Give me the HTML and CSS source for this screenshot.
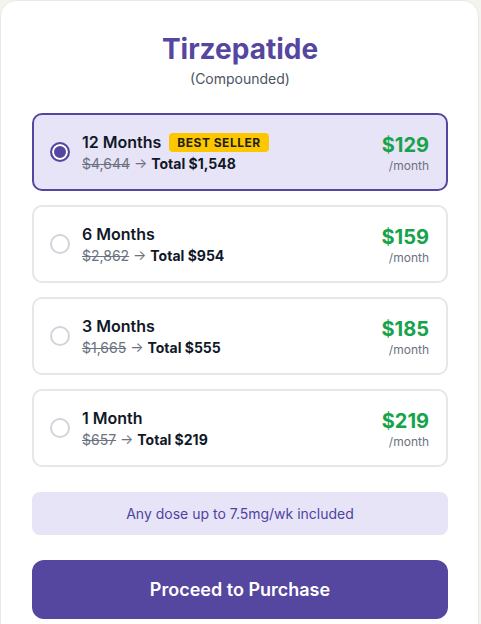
FILE: index.html
```html
<!DOCTYPE html>
<html lang="en">
  <head>
    <meta charset="UTF-8" />
    <meta name="viewport" content="width=device-width, initial-scale=1.0" />
    <title>Tirzepatide</title>
    <link rel="stylesheet" href="styles.css">
  </head>
  <body>
    <main class="card">
      <header class="head">
        <h1>Tirzepatide</h1>
        <p class="sub">(Compounded)</p>
      </header>

      <div class="plans">
        <label class="plan selected">
          <span class="radio"></span>
          <span class="info">
            <span class="name">12 Months <span class="badge">BEST SELLER</span></span>
            <span class="total"><s>$4,644</s> <span class="arrow">→</span> <b>Total $1,548</b></span>
          </span>
          <span class="price">
            <span class="amount">$129</span>
            <span class="per">/month</span>
          </span>
        </label>

        <label class="plan">
          <span class="radio"></span>
          <span class="info">
            <span class="name">6 Months</span>
            <span class="total"><s>$2,862</s> <span class="arrow">→</span> <b>Total $954</b></span>
          </span>
          <span class="price">
            <span class="amount">$159</span>
            <span class="per">/month</span>
          </span>
        </label>

        <label class="plan">
          <span class="radio"></span>
          <span class="info">
            <span class="name">3 Months</span>
            <span class="total"><s>$1,665</s> <span class="arrow">→</span> <b>Total $555</b></span>
          </span>
          <span class="price">
            <span class="amount">$185</span>
            <span class="per">/month</span>
          </span>
        </label>

        <label class="plan">
          <span class="radio"></span>
          <span class="info">
            <span class="name">1 Month</span>
            <span class="total"><s>$657</s> <span class="arrow">→</span> <b>Total $219</b></span>
          </span>
          <span class="price">
            <span class="amount">$219</span>
            <span class="per">/month</span>
          </span>
        </label>
      </div>

      <p class="note">Any dose up to 7.5mg/wk included</p>

      <button class="buy" type="button">Proceed to Purchase</button>
    </main>
  </body>
</html>
```

FILE: styles.css
```css
* {
    margin: 0;
    padding: 0;
    box-sizing: border-box;
}
body {
    font-family: Inter, "Noto Sans", sans-serif;
    background-color: #f5f3ee;
    color: #111827;
}
.card {
    width: 479px;
    min-height: 640px;
    background-color: #fff;
    border: 1px solid #ece9e3;
    border-radius: 16px;
    padding: 30px 30px 20px 31px;
}
.head {
    text-align: center;
}
.head h1 {
    font-size: 28px;
    line-height: 36px;
    font-weight: 700;
    color: #5546a0;
}
.sub {
    margin-top: 2px;
    font-size: 14px;
    line-height: 20px;
    color: #4b5563;
}
.plans {
    display: flex;
    flex-direction: column;
    gap: 14px;
    margin-top: 24px;
}
.plan {
    display: flex;
    align-items: center;
    height: 78px;
    padding: 0 17px 0 16px;
    border: 2px solid #e5e7eb;
    border-radius: 10px;
    background-color: #fff;
    cursor: pointer;
}
.plan.selected {
    border-color: #5546a0;
    background-color: #e8e4f7;
}
.radio {
    width: 20px;
    height: 20px;
    flex: none;
    border: 2px solid #d1d5db;
    border-radius: 50%;
    background-color: #fff;
    margin-right: 12px;
}
.selected .radio {
    border: 2px solid #5546a0;
    background-color: #5546a0;
    box-shadow: inset 0 0 0 2px #fff;
}
.info {
    display: flex;
    flex-direction: column;
    flex: 1;
}
.name {
    display: flex;
    align-items: center;
    gap: 8px;
    font-size: 16px;
    line-height: 24px;
    font-weight: 600;
}
.badge {
    display: inline-block;
    background-color: #fdc700;
    color: #1f1f1f;
    font-size: 12px;
    line-height: 19px;
    font-weight: 700;
    letter-spacing: 0.5px;
    padding: 0 8px;
    border-radius: 4px;
}
.total {
    font-size: 14px;
    line-height: 20px;
    color: #6b7280;
}
.total s {
    color: #6b7280;
}
.total b {
    font-weight: 700;
    color: #111827;
}
.price {
    display: flex;
    flex-direction: column;
    align-items: flex-end;
}
.amount {
    font-size: 20px;
    line-height: 28px;
    font-weight: 700;
    color: #16a34a;
}
.per {
    font-size: 12px;
    line-height: 16px;
    color: #6b7280;
    margin-top: -1px;
}
.note {
    margin-top: 25px;
    height: 43px;
    display: flex;
    align-items: center;
    justify-content: center;
    background-color: #e8e4f7;
    border-radius: 8px;
    font-size: 14px;
    color: #4f43a0;
}
.buy {
    display: block;
    width: 100%;
    height: 59px;
    margin-top: 25px;
    border: none;
    border-radius: 12px;
    background-color: #5546a0;
    color: #fff;
    font-family: inherit;
    font-size: 18px;
    font-weight: 600;
}
```
